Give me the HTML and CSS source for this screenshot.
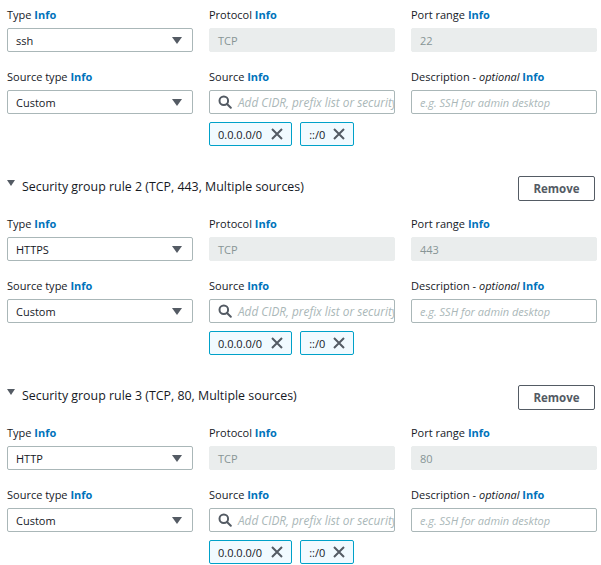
FILE: index.html
```html
<!DOCTYPE html>
<html>
<head>
<meta charset="utf-8">
<link rel="stylesheet" href="styles.css">
</head>
<body>
<div class="page">
  <section class="rule">
    <div class="grid">
      <div class="field"><div class="label">Type <span class="info">Info</span></div><div class="select"><span>ssh</span><span class="caret"></span></div></div>
      <div class="field"><div class="label">Protocol <span class="info">Info</span></div><div class="input disabled">TCP</div></div>
      <div class="field"><div class="label">Port range <span class="info">Info</span></div><div class="input disabled">22</div></div>
    </div>
    <div class="grid row2">
      <div class="field"><div class="label">Source type <span class="info">Info</span></div><div class="select"><span>Custom</span><span class="caret"></span></div></div>
      <div class="field"><div class="label">Source <span class="info">Info</span></div>
        <div class="input search"><svg class="mag" width="14" height="14" viewBox="0 0 14 14"><circle cx="5.8" cy="5.8" r="4.3" fill="none" stroke="#545b64" stroke-width="2"/><path d="M9 9 L12.8 12.8" stroke="#545b64" stroke-width="2" stroke-linecap="round"/></svg><span class="ph sph">Add CIDR, prefix list or security group</span></div>
        <div class="tokens">
          <div class="token"><span>0.0.0.0/0</span><svg width="12" height="12" viewBox="0 0 12 12"><path d="M1 1 L11 11 M11 1 L1 11" stroke="#545b64" stroke-width="2"/></svg></div>
          <div class="token"><span>::/0</span><svg width="12" height="12" viewBox="0 0 12 12"><path d="M1 1 L11 11 M11 1 L1 11" stroke="#545b64" stroke-width="2"/></svg></div>
        </div>
      </div>
      <div class="field"><div class="label">Description - <i>optional</i> <span class="info">Info</span></div><div class="input"><span class="ph">e.g. SSH for admin desktop</span></div></div>
    </div>
  </section>

  <section class="rule">
    <div class="rule-head"><div class="title"><span class="tri"></span>Security group rule 2 (TCP, 443, Multiple sources)</div><button class="btn">Remove</button></div>
    <div class="grid">
      <div class="field"><div class="label">Type <span class="info">Info</span></div><div class="select"><span>HTTPS</span><span class="caret"></span></div></div>
      <div class="field"><div class="label">Protocol <span class="info">Info</span></div><div class="input disabled">TCP</div></div>
      <div class="field"><div class="label">Port range <span class="info">Info</span></div><div class="input disabled">443</div></div>
    </div>
    <div class="grid row2">
      <div class="field"><div class="label">Source type <span class="info">Info</span></div><div class="select"><span>Custom</span><span class="caret"></span></div></div>
      <div class="field"><div class="label">Source <span class="info">Info</span></div>
        <div class="input search"><svg class="mag" width="14" height="14" viewBox="0 0 14 14"><circle cx="5.8" cy="5.8" r="4.3" fill="none" stroke="#545b64" stroke-width="2"/><path d="M9 9 L12.8 12.8" stroke="#545b64" stroke-width="2" stroke-linecap="round"/></svg><span class="ph sph">Add CIDR, prefix list or security group</span></div>
        <div class="tokens">
          <div class="token"><span>0.0.0.0/0</span><svg width="12" height="12" viewBox="0 0 12 12"><path d="M1 1 L11 11 M11 1 L1 11" stroke="#545b64" stroke-width="2"/></svg></div>
          <div class="token"><span>::/0</span><svg width="12" height="12" viewBox="0 0 12 12"><path d="M1 1 L11 11 M11 1 L1 11" stroke="#545b64" stroke-width="2"/></svg></div>
        </div>
      </div>
      <div class="field"><div class="label">Description - <i>optional</i> <span class="info">Info</span></div><div class="input"><span class="ph">e.g. SSH for admin desktop</span></div></div>
    </div>
  </section>

  <section class="rule">
    <div class="rule-head"><div class="title"><span class="tri"></span>Security group rule 3 (TCP, 80, Multiple sources)</div><button class="btn">Remove</button></div>
    <div class="grid">
      <div class="field"><div class="label">Type <span class="info">Info</span></div><div class="select"><span>HTTP</span><span class="caret"></span></div></div>
      <div class="field"><div class="label">Protocol <span class="info">Info</span></div><div class="input disabled">TCP</div></div>
      <div class="field"><div class="label">Port range <span class="info">Info</span></div><div class="input disabled">80</div></div>
    </div>
    <div class="grid row2">
      <div class="field"><div class="label">Source type <span class="info">Info</span></div><div class="select"><span>Custom</span><span class="caret"></span></div></div>
      <div class="field"><div class="label">Source <span class="info">Info</span></div>
        <div class="input search"><svg class="mag" width="14" height="14" viewBox="0 0 14 14"><circle cx="5.8" cy="5.8" r="4.3" fill="none" stroke="#545b64" stroke-width="2"/><path d="M9 9 L12.8 12.8" stroke="#545b64" stroke-width="2" stroke-linecap="round"/></svg><span class="ph sph">Add CIDR, prefix list or security group</span></div>
        <div class="tokens">
          <div class="token"><span>0.0.0.0/0</span><svg width="12" height="12" viewBox="0 0 12 12"><path d="M1 1 L11 11 M11 1 L1 11" stroke="#545b64" stroke-width="2"/></svg></div>
          <div class="token"><span>::/0</span><svg width="12" height="12" viewBox="0 0 12 12"><path d="M1 1 L11 11 M11 1 L1 11" stroke="#545b64" stroke-width="2"/></svg></div>
        </div>
      </div>
      <div class="field"><div class="label">Description - <i>optional</i> <span class="info">Info</span></div><div class="input"><span class="ph">e.g. SSH for admin desktop</span></div></div>
    </div>
  </section>
</div>
</body>
</html>
```

FILE: styles.css
```css
html, body { margin: 0; padding: 0; background: #fff; }
body { font-family: "Open Sans", "Noto Sans", sans-serif; color: #16191f; font-size: 11px; }
.page { padding: 8px 5px 0 7px; height: 557px; overflow: hidden; }
.rule { margin-bottom: 30px; }
.grid { display: grid; grid-template-columns: 186px 186px 186px; column-gap: 16px; }
.row2 { margin-top: 18px; }
.label { height: 16px; line-height: 14px; font-size: 11px; color: #16191f; margin-bottom: 4px; white-space: nowrap; }
.info { color: #0073bb; font-weight: 700; }
.select, .input { box-sizing: border-box; height: 24px; border: 1px solid #aab7b8; border-radius: 2px; display: flex; align-items: center; padding: 0 8px; font-size: 11px; white-space: nowrap; overflow: hidden; }
.select { justify-content: space-between; }
.caret { width: 0; height: 0; border-left: 5px solid transparent; border-right: 5px solid transparent; border-top: 7px solid #545b64; margin-right: 2px; }
.disabled { background: #eaeded; border-color: #eaeded; color: #879596; }
.ph { color: #aab7b8; font-style: italic; }
.sph { font-size: 11.8px; }
.search { gap: 6px; padding-right: 0; }
.mag { flex: none; }
.tokens { display: flex; gap: 8px; margin-top: 8px; }
.token { box-sizing: border-box; height: 24px; display: flex; align-items: center; gap: 9px; padding: 0 8px; border: 1px solid #00a1c9; background: #f1faff; border-radius: 2px; font-size: 11px; }
.token:last-child { gap: 8px; }
.rule-head { display: flex; justify-content: space-between; align-items: center; height: 25px; margin-bottom: 16px; }
.title { font-size: 12.4px; display: flex; align-items: center; color: #16191f; margin-top: -4px; }
.tri { width: 0; height: 0; border-left: 4px solid transparent; border-right: 4px solid transparent; border-top: 6px solid #545b64; margin: 0 7px 7px 0; }
.btn { box-sizing: border-box; width: 77px; height: 25px; border: 1px solid #545b64; background: #fff; color: #545b64; font-family: inherit; font-weight: 700; font-size: 11.5px; border-radius: 2px; padding: 0; margin-right: 1px; }
```
